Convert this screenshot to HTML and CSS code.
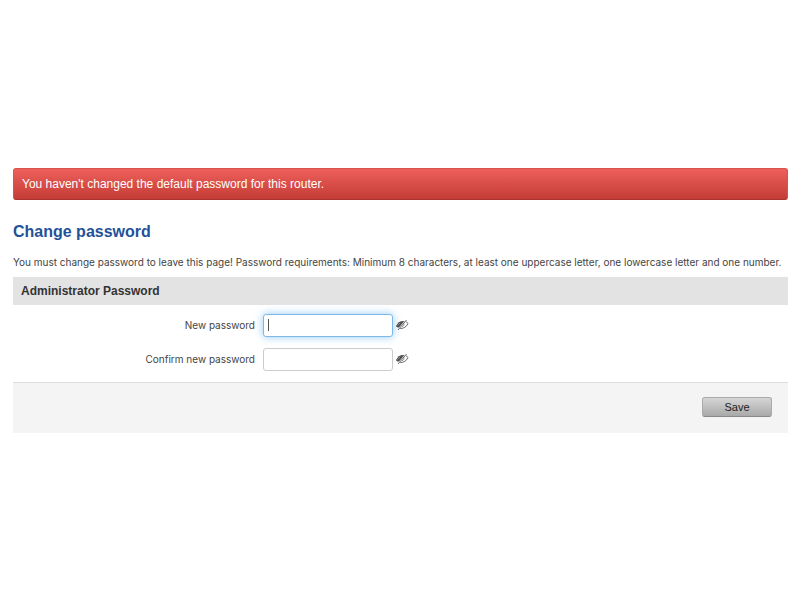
FILE: index.html
```html
<!DOCTYPE html>
<html lang="en">
<head>
    <meta charset="UTF-8">
    <meta name="viewport" content="width=device-width, initial-scale=1.0">
    <title>Change password</title>
    <link rel="stylesheet" href="styles.css">
</head>
<body>

    <main class="container">
        <div class="alert" role="alert">You haven't changed the default password for this router.</div>

        <h1>Change password</h1>
        <p class="description">You must change password to leave this page! Password requirements: Minimum 8 characters, at least one uppercase letter, one lowercase letter and one number.</p>

        <form>
            <h2>Administrator Password</h2>

            <div class="fields">
                <div class="field">
                    <label for="new-password">New password</label>
                    <input type="password" id="new-password" autofocus>
                    <button type="button" class="toggle" aria-label="Show new password">
                        <svg viewBox="0 0 14 12" width="14" height="12">
                            <path d="M1 7 C2.5 3.5 5.5 1.5 9.5 2 L4 8.5 C2.5 8.5 1.5 8 1 7Z" fill="#505050"/>
                            <path d="M11 3 C12.2 3.2 13 4 12.8 4.8 C11.5 7.8 8.5 9.7 5.2 9.5" fill="none" stroke="#666"/>
                            <path d="M9 4.5 C9.2 6 8.5 7.3 7 7.8" fill="none" stroke="#888"/>
                            <path d="M11.5 1 L3 11" stroke="#666"/>
                            <path d="M2.5 6.5 C3 5.5 4 4.5 5 4.2" fill="none" stroke="#aaa" stroke-width="0.7"/>
                        </svg>
                    </button>
                </div>
                <div class="field">
                    <label for="confirm-password">Confirm new password</label>
                    <input type="password" id="confirm-password">
                    <button type="button" class="toggle" aria-label="Show confirmed password">
                        <svg viewBox="0 0 14 12" width="14" height="12">
                            <path d="M1 7 C2.5 3.5 5.5 1.5 9.5 2 L4 8.5 C2.5 8.5 1.5 8 1 7Z" fill="#505050"/>
                            <path d="M11 3 C12.2 3.2 13 4 12.8 4.8 C11.5 7.8 8.5 9.7 5.2 9.5" fill="none" stroke="#666"/>
                            <path d="M9 4.5 C9.2 6 8.5 7.3 7 7.8" fill="none" stroke="#888"/>
                            <path d="M11.5 1 L3 11" stroke="#666"/>
                            <path d="M2.5 6.5 C3 5.5 4 4.5 5 4.2" fill="none" stroke="#aaa" stroke-width="0.7"/>
                        </svg>
                    </button>
                </div>
            </div>

            <div class="actions">
                <button type="submit" class="save">Save</button>
            </div>
        </form>
    </main>

</body>
</html>
```

FILE: styles.css
```css
* {
    box-sizing: border-box;
}

body {
    font-family: Inter, "Liberation Sans", Arial, sans-serif;
    font-size: 10px;
    line-height: 16px;
    margin: 0;
    padding: 0 12px 0 13px;
    color: #444;
    background-color: #fff;
    display: flex;
    align-items: center;
    min-height: 100vh;
}

.container {
    width: 100%;
}

.alert {
    padding: 7px 8px;
    border: 1px solid #d9534e;
    border-bottom-color: #a8352f;
    border-radius: 3px;
    background: linear-gradient(#ee5f5b, #c43c35);
    color: #fff;
    font-size: 12px;
}

.alert, h1, h2, .save {
    font-family: "Liberation Sans", Arial, sans-serif;
}

h1 {
    margin: 20px 0 10px;
    font-size: 16px;
    line-height: 24px;
    color: #1f5299;
}

.description {
    margin: 0 0 7px;
}

h2 {
    margin: 0;
    padding: 6px 8px;
    font-size: 12px;
    line-height: 16px;
    color: #333;
    background-color: #e3e3e3;
}

.fields {
    display: grid;
    gap: 11px;
    padding: 9px 0 11px;
}

.field {
    display: flex;
    align-items: center;
}

.field label {
    width: 242px;
    text-align: right;
}

.field input {
    width: 130px;
    height: 23px;
    margin-left: 8px;
    padding: 2px 4px;
    border: 1px solid #ccc;
    border-radius: 3px;
    font: inherit;
    color: #333;
    background-color: #fff;
}

.field input:focus {
    outline: none;
    border-color: #7cb8ea;
    box-shadow: 0 0 8px rgba(82, 168, 236, 0.6);
}

#new-password:focus {
    caret-color: transparent;
    background: linear-gradient(#555, #555) 4px center / 1px 12px no-repeat #fff;
}

.toggle {
    display: flex;
    margin-left: 2px;
    padding: 0;
    border: 0;
    background: none;
}

.actions {
    display: flex;
    justify-content: flex-end;
    padding: 14px 16px 16px;
    border-top: 1px solid #ddd;
    background-color: #f4f4f4;
}

.save {
    width: 70px;
    height: 20px;
    padding: 0;
    border: 1px solid #aaa;
    border-bottom-color: #888;
    border-radius: 3px;
    font-size: 11px;
    line-height: 16px;
    color: #222;
    background: linear-gradient(#d6d6d6, #a9a9a9);
}
```
